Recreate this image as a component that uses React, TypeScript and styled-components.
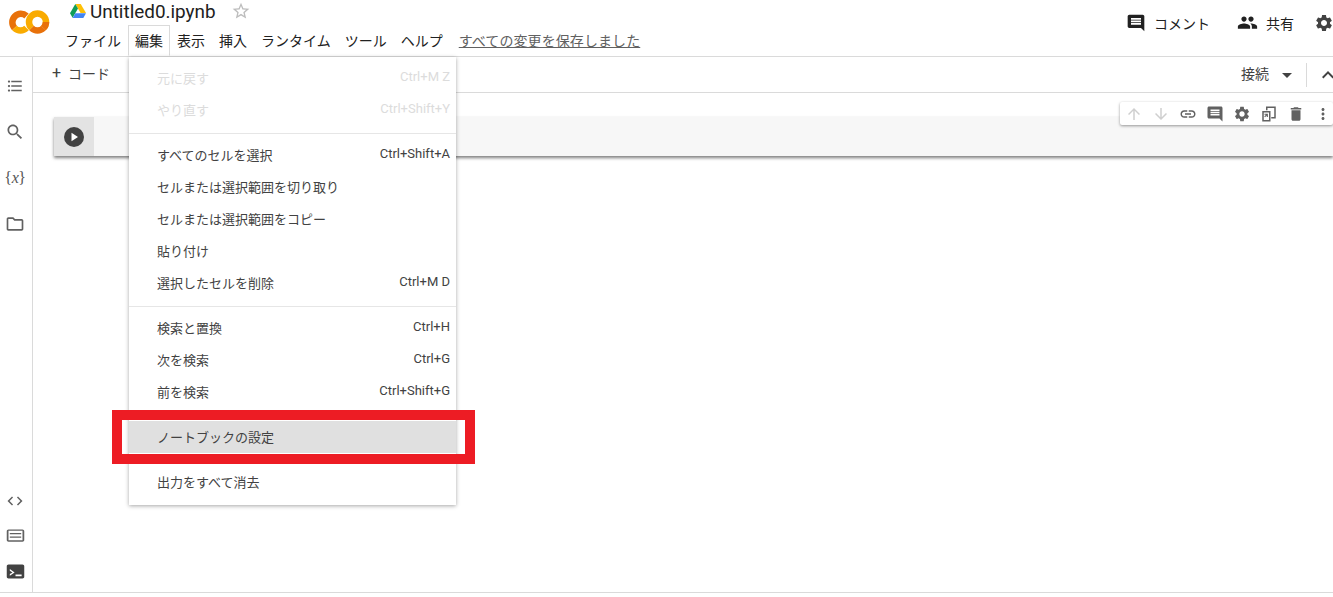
import React from "react";
import styled, { createGlobalStyle } from "styled-components";

const FONT = `Roboto, "Noto Sans CJK JP", sans-serif`;

const Global = createGlobalStyle`
  html, body { margin: 0; padding: 0; background: #fff; overflow: hidden; }
  body { font-family: ${FONT}; color: #212121; }
  * { box-sizing: border-box; }
`;

const Page = styled.div`
  width: 1333px;
  height: 597px;
  display: flex;
  flex-direction: column;
  overflow: hidden;
`;

const Header = styled.header`
  height: 57px;
  flex: none;
  display: flex;
  border-bottom: 1px solid #dadada;
`;

const LogoBox = styled.div`
  width: 58px;
  flex: none;
  padding: 9px 0 0 8px;
`;

const HeaderMain = styled.div`
  flex: 1;
  display: flex;
  flex-direction: column;
`;

const TitleRow = styled.div`
  height: 25px;
  display: flex;
  align-items: center;
  padding: 0 0 3px 12px;
`;

const Title = styled.span`
  font-size: 18.9px;
  margin: 0 15px 0 4px;
  color: #212121;
`;

const MenuRow = styled.nav`
  height: 32px;
  display: flex;
  align-items: stretch;
  font-size: 14px;
`;

const MenuLabel = styled.div<{ $open?: boolean }>`
  position: relative;
  display: flex;
  align-items: center;
  padding: 0 ${(p) => (p.$open ? 6 : 7)}px 2px;
  color: #212121;
  ${(p) =>
    p.$open &&
    `border: 1px solid #dadada; border-bottom: 1px solid #fff; z-index: 5; background: #fff;`}
`;

const Saved = styled.a`
  align-self: center;
  margin: 0 0 2px 9px;
  color: #616161;
  text-decoration: underline;
  letter-spacing: 0.08px;
`;

const HeaderRight = styled.div`
  flex: none;
  display: flex;
  align-items: center;
  font-size: 14px;
  margin-right: -1px;
  padding-bottom: 11px;
  color: #212121;
`;

const HeaderAction = styled.div<{ $gap: number; $right: number }>`
  display: flex;
  align-items: center;
  gap: ${(p) => p.$gap}px;
  margin-right: ${(p) => p.$right}px;
`;

const Body = styled.div`
  flex: 1;
  display: flex;
  min-height: 0;
  border-bottom: 1px solid #dadada;
`;

const Sidebar = styled.aside`
  width: 33px;
  flex: none;
  border-right: 1px solid #dadada;
  display: flex;
  flex-direction: column;
  padding: 6px 0 3px;
`;

const SideSlot = styled.div<{ $h: number }>`
  height: ${(p) => p.$h}px;
  width: 30px;
  display: flex;
  align-items: center;
  justify-content: center;
  color: #616161;
`;

const SideBottom = styled.div`
  margin-top: auto;
  display: flex;
  flex-direction: column;
`;

const VarGlyph = styled.span`
  font-family: "Liberation Serif", serif;
  font-size: 16px;
  letter-spacing: -0.4px;
  color: #555;
`;

const VarLetter = styled.i`
  font-style: italic;
`;

const Main = styled.main`
  flex: 1;
  min-width: 0;
  display: flex;
  flex-direction: column;
`;

const Toolbar = styled.div`
  height: 36px;
  flex: none;
  display: flex;
  align-items: center;
  border-bottom: 1px solid #dadada;
  padding: 0 0 3px 19px;
  font-size: 14px;
  color: #424242;
`;

const AddCode = styled.div`
  display: flex;
  align-items: center;
  gap: 6px;
`;

const Plus = styled.span`
  font-size: 16px;
  width: 10px;
  line-height: 1;
`;

const ToolbarRight = styled.div`
  margin-left: auto;
  margin-right: -7px;
  display: flex;
  align-items: center;
  padding-top: 3px;
`;

const RuntimeLabel = styled.span`
  margin: 0 6px 3px 0;
`;

const Divider = styled.div`
  width: 1px;
  height: 24px;
  background: #dadada;
  margin: 0 9px 0 7px;
`;

const Cell = styled.div`
  position: relative;
  margin: 24px 0 0 21px;
  height: 39px;
  display: flex;
  background: #f7f7f7;
  box-shadow: 0 2px 3px rgba(0, 0, 0, 0.5);
`;

const RunArea = styled.div`
  width: 40px;
  background: #e3e3e3;
  display: flex;
  align-items: center;
  justify-content: center;
`;

const CellTools = styled.div`
  position: absolute;
  top: -15px;
  right: 0;
  width: 213px;
  height: 23px;
  background: #fff;
  border-radius: 2px;
  box-shadow: 0 1px 3px rgba(0, 0, 0, 0.4);
  display: flex;
  align-items: center;
  padding-left: 5px;
  gap: 9px;
`;

const Dropdown = styled.div`
  position: absolute;
  top: 31px;
  left: 0;
  width: 327px;
  background: #fff;
  padding: 5px 0 7px;
  box-shadow: 0 1px 4px rgba(0, 0, 0, 0.35);
  font-size: 13px;
  color: #424242;
  z-index: 4;
`;

const Item = styled.div<{ $disabled?: boolean; $active?: boolean }>`
  position: relative;
  height: 32px;
  display: flex;
  align-items: center;
  justify-content: space-between;
  padding: 0 6px 0 28px;
  color: ${(p) => (p.$disabled ? "#dcdcdc" : "#424242")};
  background: ${(p) => (p.$active ? "#e0e0e0" : "transparent")};
`;

const ItemLabel = styled.span`
  position: relative;
  top: -1px;
`;

const Shortcut = styled.span`
  font-size: 13px;
  position: relative;
  top: -2px;
`;

const Sep = styled.div`
  height: 1px;
  background: #e6e6e6;
  margin: 7px 0 5px;
`;

const RedBox = styled.div`
  position: absolute;
  left: -17px;
  right: -19px;
  top: -11px;
  bottom: -11px;
  border: 10px solid #ed1c24;
  pointer-events: none;
`;

const Footer = styled.div`
  height: 4px;
  flex: none;
`;

const Icon = ({
  d,
  size = 24,
  color = "currentColor",
}: {
  d: string;
  size?: number;
  color?: string;
}) => (
  <svg width={size} height={size} viewBox="0 0 24 24" fill={color} style={{ flex: "none", display: "block" }}>
    <path d={d} />
  </svg>
);

const P = {
  comment:
    "M21.99 4c0-1.1-.89-2-1.99-2H4c-1.1 0-2 .9-2 2v12c0 1.1.9 2 2 2h14l4 4-.01-18zM18 14H6v-2h12v2zm0-3H6V9h12v2zm0-3H6V6h12v2z",
  people:
    "M16 11c1.66 0 2.99-1.34 2.99-3S17.66 5 16 5c-1.66 0-3 1.34-3 3s1.34 3 3 3zm-8 0c1.66 0 2.99-1.34 2.99-3S9.66 5 8 5C6.34 5 5 6.34 5 8s1.34 3 3 3zm0 2c-2.33 0-7 1.17-7 3.5V19h14v-2.5c0-2.33-4.67-3.5-7-3.5zm8 0c-.29 0-.62.02-.97.05 1.16.84 1.97 1.97 1.97 3.45V19h6v-2.5c0-2.33-4.67-3.5-7-3.5z",
  gear:
    "M19.14 12.94c.04-.3.06-.61.06-.94 0-.32-.02-.64-.07-.94l2.03-1.58c.18-.14.23-.41.12-.61l-1.92-3.32c-.12-.22-.37-.29-.59-.22l-2.39.96c-.5-.38-1.03-.7-1.62-.94l-.36-2.54c-.04-.24-.24-.41-.48-.41h-3.84c-.24 0-.43.17-.47.41l-.36 2.54c-.59.24-1.13.57-1.62.94l-2.39-.96c-.22-.08-.47 0-.59.22L2.74 8.87c-.12.21-.08.47.12.61l2.03 1.58c-.05.3-.09.63-.09.94s.02.64.07.94l-2.03 1.58c-.18.14-.23.41-.12.61l1.92 3.32c.12.22.37.29.59.22l2.39-.96c.5.38 1.03.7 1.62.94l.36 2.54c.05.24.24.41.48.41h3.84c.24 0 .44-.17.47-.41l.36-2.54c.59-.24 1.13-.56 1.62-.94l2.39.96c.22.08.47 0 .59-.22l1.92-3.32c.12-.22.07-.47-.12-.61l-2.01-1.58zM12 15.6c-1.98 0-3.6-1.62-3.6-3.6s1.62-3.6 3.6-3.6 3.6 1.62 3.6 3.6-1.62 3.6-3.6 3.6z",
  link:
    "M3.9 12c0-1.71 1.39-3.1 3.1-3.1h4V7H7c-2.76 0-5 2.24-5 5s2.24 5 5 5h4v-1.9H7c-1.71 0-3.1-1.39-3.1-3.1zM8 13h8v-2H8v2zm9-6h-4v1.9h4c1.71 0 3.1 1.39 3.1 3.1s-1.39 3.1-3.1 3.1h-4V17h4c2.76 0 5-2.24 5-5s-2.24-5-5-5z",
  trash: "M6 19c0 1.1.9 2 2 2h8c1.1 0 2-.9 2-2V7H6v12zM19 4h-3.5l-1-1h-5l-1 1H5v2h14V4z",
  more:
    "M12 8c1.1 0 2-.9 2-2s-.9-2-2-2-2 .9-2 2 .9 2 2 2zm0 2c-1.1 0-2 .9-2 2s.9 2 2 2 2-.9 2-2-.9-2-2-2zm0 6c-1.1 0-2 .9-2 2s.9 2 2 2 2-.9 2-2-.9-2-2-2z",
  up: "M4 12l1.41 1.41L11 7.83V20h2V7.83l5.58 5.59L20 12l-8-8-8 8z",
  down: "M20 12l-1.41-1.41L13 16.17V4h-2v12.17l-5.58-5.59L4 12l8 8 8-8z",
  search:
    "M15.5 14h-.79l-.28-.27C15.41 12.59 16 11.11 16 9.5 16 5.91 13.09 3 9.5 3S3 5.91 3 9.5 5.91 16 9.5 16c1.61 0 3.09-.59 4.23-1.57l.27.28v.79l5 4.99L20.49 19l-4.99-5zm-6 0C7.01 14 5 11.99 5 9.5S7.01 5 9.5 5 14 7.01 14 9.5 11.99 14 9.5 14z",
  list:
    "M4 10.5c-.83 0-1.5.67-1.5 1.5s.67 1.5 1.5 1.5 1.5-.67 1.5-1.5-.67-1.5-1.5-1.5zm0-6c-.83 0-1.5.67-1.5 1.5S3.17 7.5 4 7.5 5.5 6.83 5.5 6 4.83 4.5 4 4.5zm0 12c-.83 0-1.5.68-1.5 1.5s.68 1.5 1.5 1.5 1.5-.68 1.5-1.5-.67-1.5-1.5-1.5zM7 19h14v-2H7v2zm0-6h14v-2H7v2zm0-8v2h14V5H7z",
  folder:
    "M9.17 6l2 2H20v10H4V6h5.17M10 4H4c-1.1 0-1.99.9-1.99 2L2 18c0 1.1.9 2 2 2h16c1.1 0 2-.9 2-2V8c0-1.1-.9-2-2-2h-8l-2-2z",
  code: "M9.4 16.6L4.8 12l4.6-4.6L8 6l-6 6 6 6 1.4-1.4zm5.2 0l4.6-4.6-4.6-4.6L16 6l6 6-6 6-1.4-1.4z",
  star:
    "M22 9.24l-7.19-.62L12 2 9.19 8.63 2 9.24l5.46 4.73L5.82 21 12 17.27 18.18 21l-1.63-7.03L22 9.24zM12 15.4l-3.76 2.27 1-4.28-3.32-2.88 4.38-.38L12 6.1l1.71 4.04 4.38.38-3.32 2.88 1 4.28L12 15.4z",
  less: "M12 8l-6 6 1.41 1.41L12 10.83l4.59 4.58L18 14z",
  caret: "M7 10l5 5 5-5z",
  palette:
    "M4 5h16c1.1 0 2 .9 2 2v10c0 1.1-.9 2-2 2H4c-1.1 0-2-.9-2-2V7c0-1.1.9-2 2-2zm0 1.500v11h16v-11H4zm1.500 2.500h13v1.500h-13V9zm0 4h13v1.500h-13V13z",
  terminal:
    "M4 4h16c1.1 0 2 .9 2 2v12c0 1.1-.9 2-2 2H4c-1.1 0-2-.9-2-2V6c0-1.1.9-2 2-2zm1.5 5.2v2l3 1.8-3 1.8v2L11 13l-5.500-3.800zM12 15.500v2h7v-2h-7z",
  mirror:
    "M8 2h13v16h-6v-2h4V4H10v3H8zM3 8h11v14H3zm2 2v10h7V10zM10.500 11.500v4.500H9v-2l-2.300 2.300-1-1L8 13H6v-1.500z",
};

const ColabLogo = () => (
  <svg width="42" height="26" viewBox="0 0 42 26" style={{ display: "block" }}>
    <g fill="none" strokeWidth="6.500">
      <path d="M18.500 7 A8.500 8.500 0 0 0 6.500 19" stroke="#e8710a" />
      <path d="M6.500 19 A8.500 8.500 0 0 0 18.500 19" stroke="#f9ab00" />
      <path d="M23.500 19 A8.500 8.500 0 1 1 35.500 19" stroke="#f9ab00" />
      <path d="M35.500 19 A8.500 8.500 0 0 1 23.500 19" stroke="#e8710a" />
      <path d="M38 13 A8.500 8.500 0 0 1 35.500 19" stroke="#e8710a" />
    </g>
  </svg>
);

const DriveLogo = () => (
  <svg width="16" height="14" viewBox="0 0 16 14" style={{ display: "block", flex: "none" }}>
    <path d="M5.300 0h5.400l5.300 9h-5.400z" fill="#ffc107" />
    <path d="M5.300 0L0 9.300l2.600 4.400L8 4.500z" fill="#0f9d58" />
    <path d="M2.600 14L5.300 9.300H16L13.300 14z" fill="#4285f4" />
  </svg>
);

const PlayButton = () => (
  <svg width="20" height="20" viewBox="0 0 20 20" style={{ display: "block" }}>
    <circle cx="10" cy="10" r="10" fill="#424242" />
    <path d="M7.500 5.800L14 10l-6.500 4.200z" fill="#fff" />
  </svg>
);

type Row = { label: string; shortcut?: string; disabled?: boolean; active?: boolean };

const groups: Row[][] = [
  [
    { label: "元に戻す", shortcut: "Ctrl+M Z", disabled: true },
    { label: "やり直す", shortcut: "Ctrl+Shift+Y", disabled: true },
  ],
  [
    { label: "すべてのセルを選択", shortcut: "Ctrl+Shift+A" },
    { label: "セルまたは選択範囲を切り取り" },
    { label: "セルまたは選択範囲をコピー" },
    { label: "貼り付け" },
    { label: "選択したセルを削除", shortcut: "Ctrl+M D" },
  ],
  [
    { label: "検索と置換", shortcut: "Ctrl+H" },
    { label: "次を検索", shortcut: "Ctrl+G" },
    { label: "前を検索", shortcut: "Ctrl+Shift+G" },
  ],
  [{ label: "ノートブックの設定", active: true }],
  [{ label: "出力をすべて消去" }],
];

const menus = ["ファイル", "編集", "表示", "挿入", "ランタイム", "ツール", "ヘルプ"];

export default function App() {
  return (
    <Page>
      <Global />
      <Header>
        <LogoBox>
          <ColabLogo />
        </LogoBox>
        <HeaderMain>
          <TitleRow>
            <DriveLogo />
            <Title>Untitled0.ipynb</Title>
            <Icon d={P.star} size={20} color="#bdbdbd" />
          </TitleRow>
          <MenuRow>
            {menus.map((m) => (
              <MenuLabel key={m} $open={m === "編集"}>
                {m}
                {m === "編集" && (
                  <Dropdown>
                    {groups.map((g, i) => (
                      <React.Fragment key={i}>
                        {i > 0 && <Sep />}
                        {g.map((r) => (
                          <Item key={r.label} $disabled={r.disabled} $active={r.active}>
                            <ItemLabel>{r.label}</ItemLabel>
                            {r.shortcut && <Shortcut>{r.shortcut}</Shortcut>}
                            {r.active && <RedBox />}
                          </Item>
                        ))}
                      </React.Fragment>
                    ))}
                  </Dropdown>
                )}
              </MenuLabel>
            ))}
            <Saved>すべての変更を保存しました</Saved>
          </MenuRow>
        </HeaderMain>
        <HeaderRight>
          <HeaderAction $gap={8} $right={27}>
            <Icon d={P.comment} size={20} color="#212121" />
            <span>コメント</span>
          </HeaderAction>
          <HeaderAction $gap={8} $right={20}>
            <Icon d={P.people} size={21} color="#212121" />
            <span>共有</span>
          </HeaderAction>
          <Icon d={P.gear} size={20} color="#424242" />
        </HeaderRight>
      </Header>
      <Body>
        <Sidebar>
          <SideSlot $h={46}><Icon d={P.list} size={18} /></SideSlot>
          <SideSlot $h={46}><Icon d={P.search} size={20} /></SideSlot>
          <SideSlot $h={46}>
            <VarGlyph>
              {"{"}
              <VarLetter>x</VarLetter>
              {"}"}
            </VarGlyph>
          </SideSlot>
          <SideSlot $h={46}><Icon d={P.folder} size={20} /></SideSlot>
          <SideBottom>
            <SideSlot $h={34}><Icon d={P.code} size={18} /></SideSlot>
            <SideSlot $h={35}><Icon d={P.palette} size={21} /></SideSlot>
            <SideSlot $h={36}><Icon d={P.terminal} size={21} color="#424242" /></SideSlot>
          </SideBottom>
        </Sidebar>
        <Main>
          <Toolbar>
            <AddCode>
              <Plus>+</Plus>
              <span>コード</span>
            </AddCode>
            <ToolbarRight>
              <RuntimeLabel>接続</RuntimeLabel>
              <Icon d={P.caret} size={24} color="#424242" />
              <Divider />
              <Icon d={P.less} size={24} color="#424242" />
            </ToolbarRight>
          </Toolbar>
          <Cell>
            <RunArea>
              <PlayButton />
            </RunArea>
            <CellTools>
              <Icon d={P.up} size={18} color="#cfcfcf" />
              <Icon d={P.down} size={18} color="#cfcfcf" />
              <Icon d={P.link} size={18} color="#616161" />
              <Icon d={P.comment} size={18} color="#616161" />
              <Icon d={P.gear} size={18} color="#616161" />
              <Icon d={P.mirror} size={18} color="#616161" />
              <Icon d={P.trash} size={18} color="#616161" />
              <Icon d={P.more} size={18} color="#616161" />
            </CellTools>
          </Cell>
        </Main>
      </Body>
      <Footer />
    </Page>
  );
}
